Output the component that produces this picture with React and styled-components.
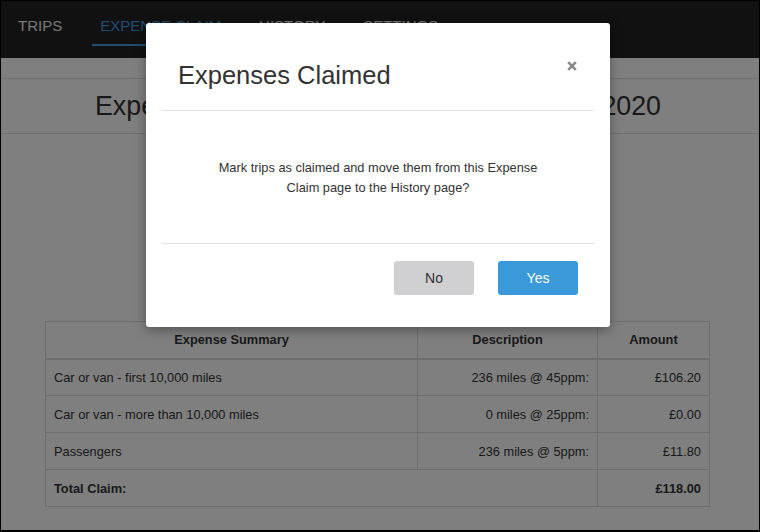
import React from 'react'
import styled, { createGlobalStyle } from 'styled-components'

const GlobalStyle = createGlobalStyle`
    * { box-sizing: border-box; }
    html, body { margin: 0; padding: 0; background: #fff; }
    body {
        font-family: "Liberation Sans", Arial, Helvetica, sans-serif;
        color: #333;
    }
`

const navItems = ['Trips', 'Expense Claim', 'History', 'Settings']

const rows = [
    { label: 'Car or van - first 10,000 miles', desc: '236 miles @ 45ppm:', amount: '£106.20' },
    { label: 'Car or van - more than 10,000 miles', desc: '0 miles @ 25ppm:', amount: '£0.00' },
    { label: 'Passengers', desc: '236 miles @ 5ppm:', amount: '£11.80' },
]

function App() {
    return (
        <>
            <GlobalStyle />
            <Frame>
                <NavBar>
                    {navItems.map((item) => (
                        <NavItem key={item} $active={item === 'Expense Claim'}>{item}</NavItem>
                    ))}
                </NavBar>
                <Page>
                    <TitleBand>
                        <h1>Expense Claim: 1 January 2020 - 30 June 2020</h1>
                    </TitleBand>
                    <Summary>
                        <thead>
                            <tr>
                                <th>Expense Summary</th>
                                <th className="desc">Description</th>
                                <th className="amount">Amount</th>
                            </tr>
                        </thead>
                        <tbody>
                            {rows.map((r) => (
                                <tr key={r.label}>
                                    <td>{r.label}</td>
                                    <td className="right">{r.desc}</td>
                                    <td className="right">{r.amount}</td>
                                </tr>
                            ))}
                            <tr className="total">
                                <td colSpan={2}>Total Claim:</td>
                                <td className="right">£118.00</td>
                            </tr>
                        </tbody>
                    </Summary>
                </Page>
                <Overlay>
                    <Modal>
                        <ModalHeader>
                            <h2>Expenses Claimed</h2>
                            <CloseButton aria-label="Close">
                                <svg width="10" height="10" viewBox="0 0 10 10">
                                    <path d="M1.2 1.2 L8.8 8.8 M8.8 1.2 L1.2 8.8" stroke="#8a8a8a" strokeWidth="2.6" />
                                </svg>
                            </CloseButton>
                        </ModalHeader>
                        <ModalBody>
                            <p>Mark trips as claimed and move them from this Expense Claim page to the History page?</p>
                        </ModalBody>
                        <ModalFooter>
                            <Button $variant="secondary">No</Button>
                            <Button $variant="primary">Yes</Button>
                        </ModalFooter>
                    </Modal>
                </Overlay>
            </Frame>
        </>
    )
}

const Frame = styled.div`
    position: relative;
    width: 760px;
    height: 532px;
    border: 1px solid #000;
    border-bottom-width: 2px;
    overflow: hidden;
    background: #fff;
    display: flex;
    flex-direction: column;
`

const NavBar = styled.nav`
    height: 57px;
    flex-shrink: 0;
    background: #222;
    display: flex;
    align-items: stretch;
    gap: 22px;
    padding-left: 9px;
`

const NavItem = styled.a`
    display: flex;
    align-items: center;
    padding: 5px 8px 0;
    font-size: 15px;
    text-transform: uppercase;
    color: ${(p) => (p.$active ? '#3d9be0' : '#eee')};
    border-bottom: 2px solid ${(p) => (p.$active ? '#3d9be0' : 'transparent')};
    margin-bottom: 12px;
`

const Page = styled.div`
    flex: 1;
    padding-top: 20px;
`

const TitleBand = styled.div`
    border-top: 1px solid #ddd;
    border-bottom: 1px solid #ddd;
    height: 56px;
    display: flex;
    align-items: center;
    justify-content: center;
    padding-right: 4px;
    h1 {
        margin: 0;
        font-size: 26.8px;
        font-weight: 400;
        color: #333;
    }
`

const Summary = styled.table`
    margin: 187px 0 0 44px;
    width: 665px;
    border-collapse: collapse;
    font-size: 12.8px;
    color: #333;
    th, td {
        border: 1px solid #ddd;
        height: 37px;
        padding: 0 8px;
    }
    th {
        font-weight: 700;
        text-align: center;
        border-bottom-width: 2px;
    }
    th.desc { width: 180px; }
    th.amount { width: 112px; }
    td.right { text-align: right; }
    tr.total td { font-weight: 700; }
`

const Overlay = styled.div`
    position: absolute;
    inset: 0;
    background: rgba(0, 0, 0, 0.5);
    padding: 22px 0 0 145px;
`

const Modal = styled.div`
    width: 464px;
    height: 304px;
    background: #fff;
    border-radius: 3px;
    box-shadow: 0 3px 12px rgba(0, 0, 0, 0.35);
    padding: 0 16px;
    display: flex;
    flex-direction: column;
`

const ModalHeader = styled.div`
    height: 88px;
    border-bottom: 1px solid #e2e2e2;
    display: flex;
    align-items: flex-start;
    justify-content: space-between;
    padding: 0 17px 0 16px;
    h2 {
        margin: 38px 0 0;
        font-size: 25.5px;
        font-weight: 400;
        color: #333;
        line-height: 28px;
    }
`

const CloseButton = styled.button`
    border: 0;
    background: none;
    padding: 0;
    margin-top: 38px;
    width: 10px;
    height: 10px;
    display: flex;
    svg { display: block; }
`

const ModalBody = styled.div`
    height: 133px;
    border-bottom: 1px solid #e2e2e2;
    display: flex;
    align-items: center;
    justify-content: center;
    padding-top: 2px;
    p {
        margin: 0;
        max-width: 340px;
        text-align: center;
        font-size: 12.8px;
        line-height: 20px;
        color: #333;
    }
`

const ModalFooter = styled.div`
    display: flex;
    justify-content: flex-end;
    gap: 24px;
    padding: 17px 16px 0 0;
`

const Button = styled.button`
    width: 80px;
    height: 34px;
    border: 0;
    border-radius: 3px;
    font-family: inherit;
    font-size: 14px;
    background: ${(p) => (p.$variant === 'primary' ? '#3a99d8' : '#d0d0d2')};
    color: ${(p) => (p.$variant === 'primary' ? '#fff' : '#333')};
`

export default App
